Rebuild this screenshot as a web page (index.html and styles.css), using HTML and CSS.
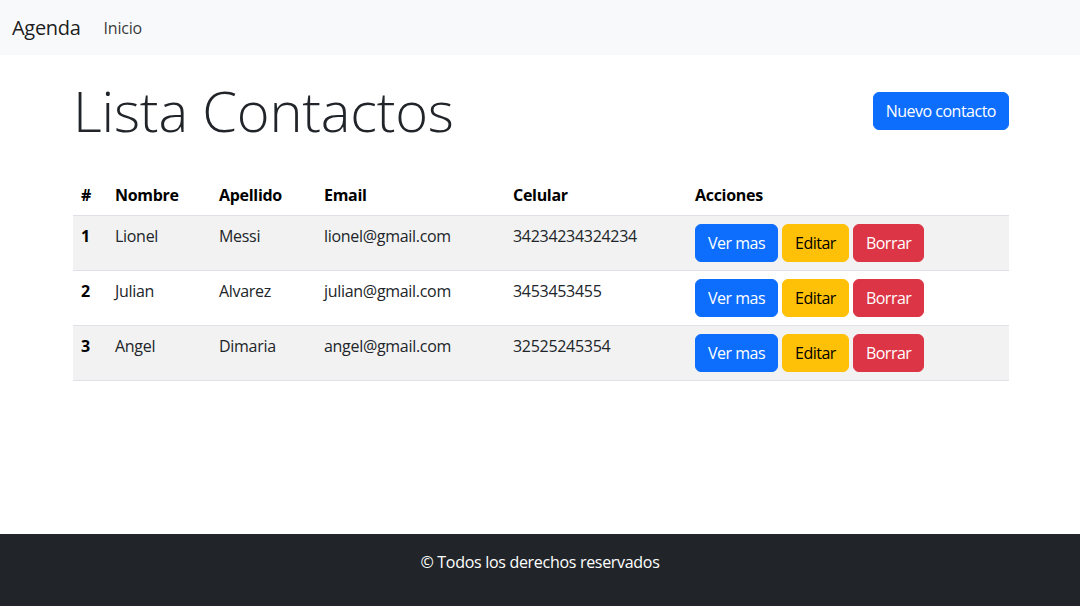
FILE: index.html
```html
<!DOCTYPE html>
<html lang="es">
<head>
<meta charset="utf-8">
<title>Agenda</title>
<link rel="stylesheet" href="styles.css">
</head>
<body>
<nav class="navbar">
  <a class="brand" href="#">Agenda</a>
  <a class="nav-link" href="#">Inicio</a>
</nav>
<main class="main">
  <div class="container">
    <div class="header-row">
      <h1 class="title">Lista Contactos</h1>
      <button class="btn btn-primary">Nuevo contacto</button>
    </div>
    <table class="table">
      <colgroup>
        <col class="c1"><col class="c2"><col class="c3"><col class="c4"><col class="c5"><col class="c6">
      </colgroup>
      <thead>
        <tr><th>#</th><th>Nombre</th><th>Apellido</th><th>Email</th><th>Celular</th><th>Acciones</th></tr>
      </thead>
      <tbody>
        <tr class="odd">
          <th>1</th><td>Lionel</td><td>Messi</td><td>lionel@gmail.com</td><td>34234234324234</td>
          <td><div class="actions"><button class="btn btn-primary">Ver mas</button><button class="btn btn-warning">Editar</button><button class="btn btn-danger">Borrar</button></div></td>
        </tr>
        <tr>
          <th>2</th><td>Julian</td><td>Alvarez</td><td>julian@gmail.com</td><td>3453453455</td>
          <td><div class="actions"><button class="btn btn-primary">Ver mas</button><button class="btn btn-warning">Editar</button><button class="btn btn-danger">Borrar</button></div></td>
        </tr>
        <tr class="odd">
          <th>3</th><td>Angel</td><td>Dimaria</td><td>angel@gmail.com</td><td>32525245354</td>
          <td><div class="actions"><button class="btn btn-primary">Ver mas</button><button class="btn btn-warning">Editar</button><button class="btn btn-danger">Borrar</button></div></td>
        </tr>
      </tbody>
    </table>
  </div>
</main>
<footer class="footer">
  <p>© Todos los derechos reservados</p>
</footer>
</body>
</html>
```
FILE: styles.css
```css
* { box-sizing: border-box; }
html, body { margin: 0; padding: 0; }
body {
  font-family: "Open Sans", "Noto Sans", sans-serif;
  font-size: 16px;
  line-height: 1.5;
  color: #212529;
  background: #fff;
  min-height: 100vh;
  display: flex;
  flex-direction: column;
}
.navbar {
  background: #f8f9fa;
  height: 55px;
  display: flex;
  align-items: center;
  padding: 0 12px;
}
.brand {
  font-size: 20px;
  color: rgba(0,0,0,0.9);
  text-decoration: none;
  margin-right: 15px;
  letter-spacing: -0.3px;
}
.nav-link {
  font-size: 16px;
  color: rgba(0,0,0,0.8);
  text-decoration: none;
  padding: 8px;
  letter-spacing: -0.2px;
}
.main { flex: 1; }
.container {
  width: 960px;
  margin: 0 auto;
  padding: 0 11px 0 13px;
}
.header-row {
  display: flex;
  justify-content: space-between;
  align-items: center;
  margin-top: 22px;
  margin-bottom: 31px;
}
.title {
  margin: 0;
  font-size: 56px;
  font-weight: 300;
  line-height: 1.2;
  color: #212529;
  letter-spacing: -0.2px;
}
.btn {
  display: inline-block;
  font-family: inherit;
  font-size: 16px;
  line-height: 1.5;
  padding: 6px 12px;
  border: 1px solid transparent;
  border-radius: 6px;
  cursor: pointer;
  letter-spacing: -0.5px;
}
.btn-primary { background: #0d6efd; border-color: #0d6efd; color: #fff; }
.btn-warning { background: #ffc107; border-color: #ffc107; color: #000; }
.btn-danger { background: #dc3545; border-color: #dc3545; color: #fff; }
.table {
  width: 100%;
  border-collapse: collapse;
  table-layout: fixed;
}
.c1 { width: 34px; }
.c2 { width: 104px; }
.c3 { width: 105px; }
.c4 { width: 189px; }
.c5 { width: 182px; }
.c6 { width: 322px; }
.table th, .table td {
  padding: 8px;
  text-align: left;
  border-bottom: 1px solid #dee2e6;
  vertical-align: top;
  letter-spacing: -0.3px;
}
.table thead th { color: #000; font-weight: 700; }
.table tbody th { font-weight: 700; color: #000; }
.table tbody tr.odd > * { background: #f2f2f2; }
.actions { display: flex; gap: 4px; }
.footer {
  background: #212529;
  color: #fff;
  text-align: center;
  padding: 16px 0;
}
.footer p { margin: 0 0 16px; letter-spacing: -0.3px; }
```
